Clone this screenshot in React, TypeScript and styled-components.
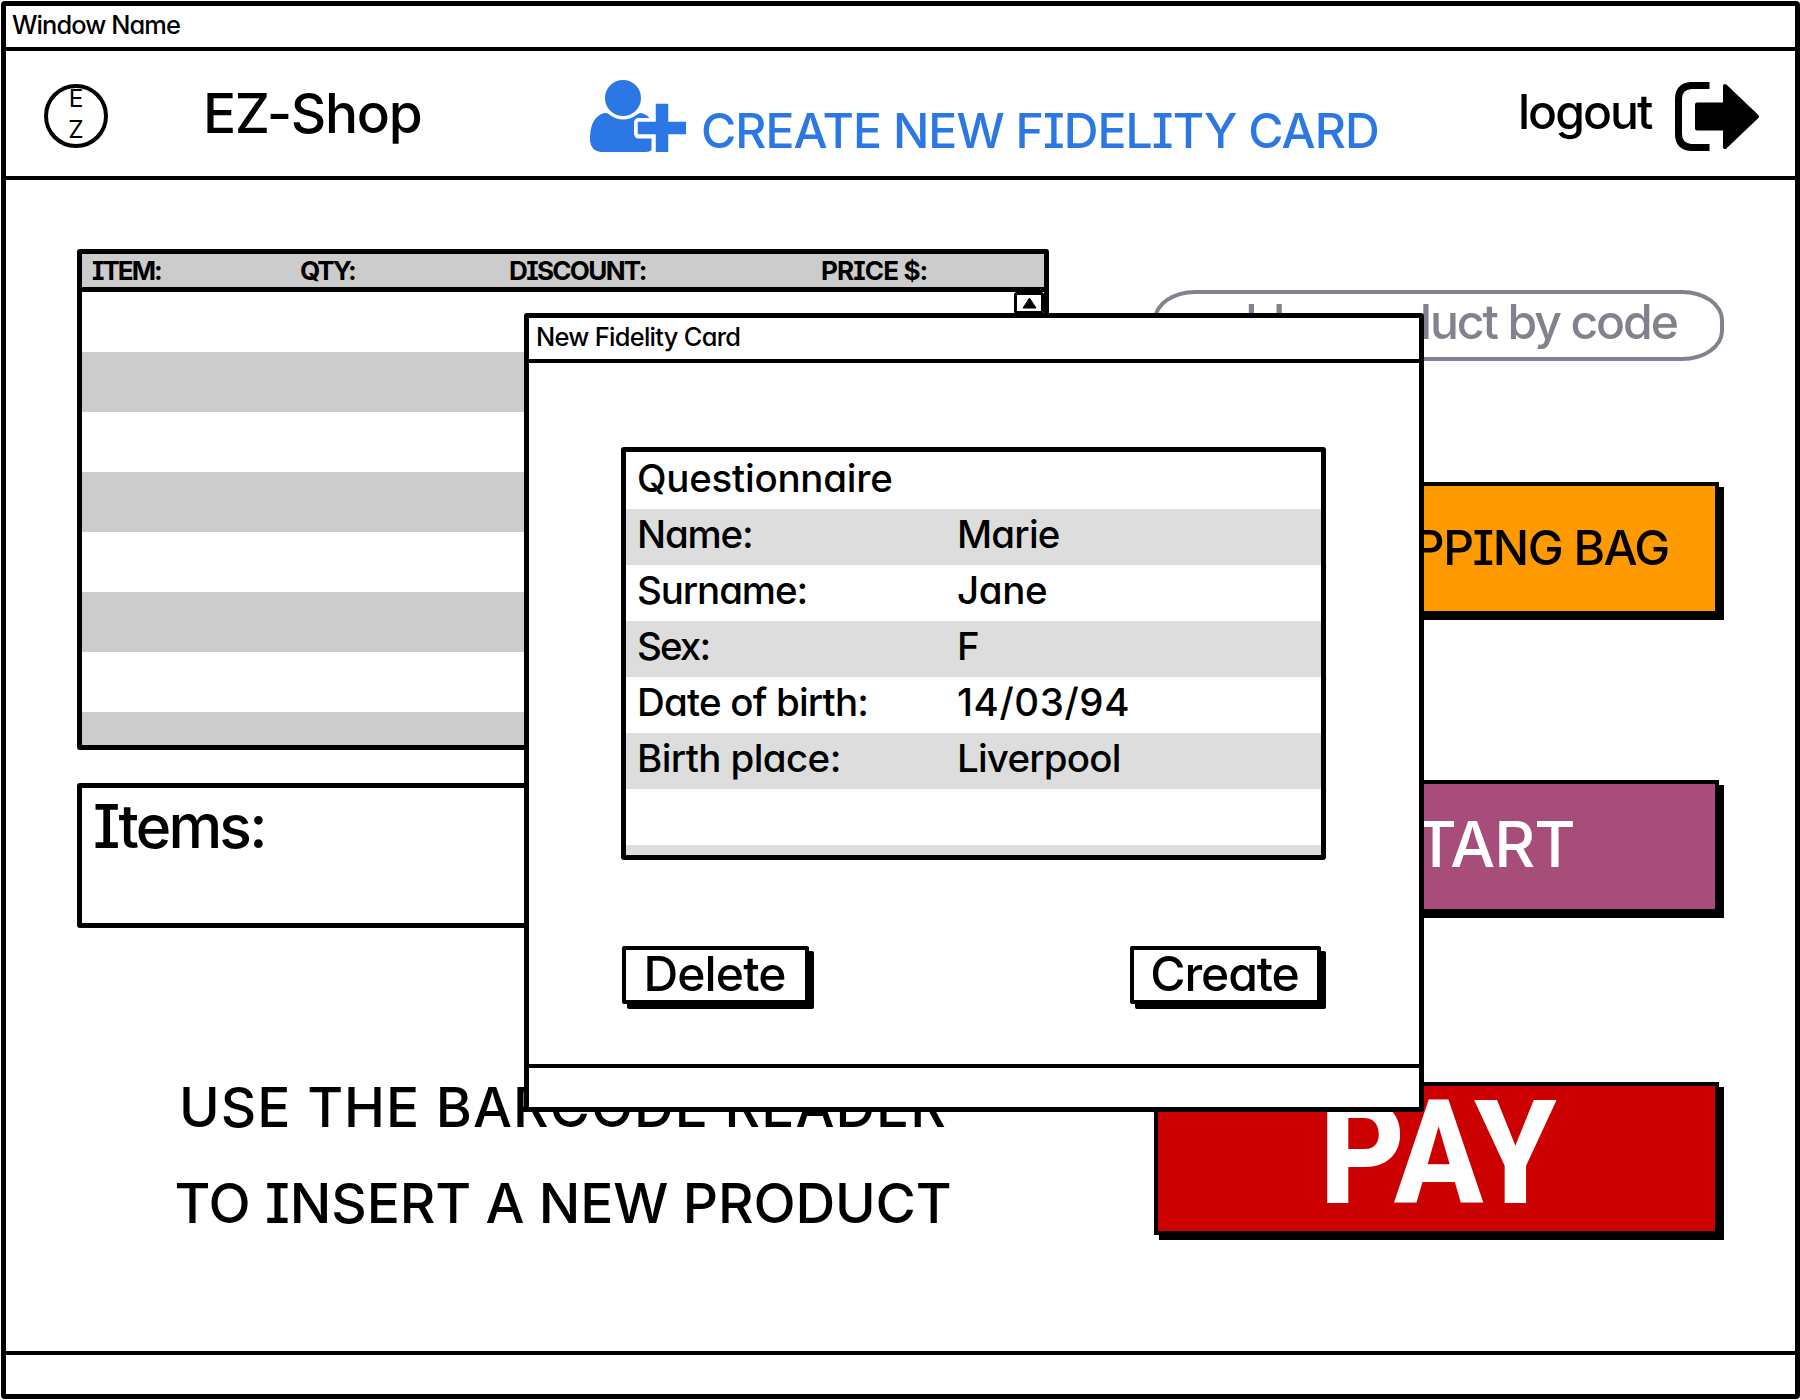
import React from "react";
import styled, { createGlobalStyle } from "styled-components";

const Global = createGlobalStyle`
  * { box-sizing: border-box; }
  body { margin: 0; background: #fff; overflow: hidden; }
`;

const ink = "#000";
const blue = "#2b78e4";
const slate = "#82828e";

const Screen = styled.div`
  position: relative;
  width: 1800px;
  height: 1400px;
  padding: 1px 0 1px 1px;
  color: ${ink};
  font-family: Inter, "Open Sans", sans-serif;
  font-feature-settings: "cv11", "cv08";
`;

const AppWindow = styled.div`
  display: flex;
  flex-direction: column;
  height: 1398px;
  border: 5px solid ${ink};
  border-radius: 4px;
  background: #fff;
`;

const Label = styled.span<{ $size: number; $spacing?: number; $weight?: number }>`
  font-size: ${(p) => p.$size}px;
  font-weight: ${(p) => p.$weight ?? 500};
  letter-spacing: ${(p) => p.$spacing ?? 0}px;
  line-height: 1;
  white-space: pre;
`;

const TitleBar = styled.div<{ $height: number; $indent: number }>`
  display: flex;
  flex: none;
  align-items: center;
  height: ${(p) => p.$height}px;
  padding: 0 0 3px ${(p) => p.$indent}px;
  border-bottom: 4.5px solid ${ink};
`;

const StatusBar = styled.div`
  flex: none;
  height: 43px;
  border-top: 4.5px solid ${ink};
`;

const Header = styled.header`
  display: flex;
  flex: none;
  height: 129px;
  border-bottom: 4px solid ${ink};
`;

const Logo = styled.div`
  display: flex;
  flex-direction: column;
  align-items: center;
  width: 64px;
  height: 64px;
  margin: 33px 0 0 38px;
  border: 4px solid ${ink};
  border-radius: 50%;
  font-size: 24.5px;
  line-height: 31.5px;
`;

const LogoLetter = styled.span`
  &:first-child { margin-top: -5px; }
`;

const Brand = styled.h1`
  display: flex;
  width: 387px;
  margin: 35px 0 0 95px;
`;

const FidelityLink = styled.a`
  display: flex;
  width: 893px;
  padding-top: 29px;
  gap: 15px;
  color: ${blue};
`;

const FidelityText = styled.div`
  padding-top: 27px;
`;

const Logout = styled.a`
  display: flex;
  width: 280px;
  gap: 25px;
  padding: 31px 0 0 35px;
`;

const LogoutText = styled.div`
  width: 132px;
  padding-top: 6px;
`;

const Main = styled.main`
  display: flex;
  flex: 1;
  gap: 104px;
  padding: 69px 0 0 71px;
`;

const CartColumn = styled.section`
  width: 972px;
`;

const ActionColumn = styled.section`
  width: 571px;
  padding-top: 41px;
`;

const Cart = styled.div`
  height: 501px;
  border: 5px solid ${ink};
  border-radius: 3px;
`;

const CartHead = styled.div`
  display: grid;
  grid-template-columns: 208px 209px 312px 1fr;
  align-items: center;
  height: 38px;
  padding: 3px 0 0 10px;
  border-bottom: 5px solid ${ink};
  background: #ccc;
`;

const CartBody = styled.div`
  display: flex;
  justify-content: flex-end;
  height: 453px;
  background: repeating-linear-gradient(#fff 0 60px, #ccc 60px 120px);
`;

const ScrollUp = styled.div`
  display: flex;
  align-items: center;
  justify-content: center;
  width: 30px;
  height: 22px;
  border: 3px solid ${ink};
  border-radius: 3px;
  background: #fff;
`;

const ItemsBox = styled.div`
  height: 145px;
  margin-top: 33px;
  padding: 8px 0 0 11px;
  border: 5px solid ${ink};
  border-radius: 3px;
`;

const Instruction = styled.p`
  display: flex;
  flex-direction: column;
  align-items: center;
  gap: 41px;
  margin: 152px 0 0;
`;

const CodeField = styled.div`
  display: flex;
  align-items: center;
  justify-content: center;
  height: 71px;
  padding-bottom: 6px;
  border: 4px solid ${slate};
  border-radius: 42px / 30px;
  color: ${slate};
`;

const ActionButton = styled.button<{ $fill: string; $color: string; $height: number; $gap: number; $lift: number }>`
  display: flex;
  align-items: center;
  justify-content: center;
  width: 565px;
  height: ${(p) => p.$height}px;
  margin: ${(p) => p.$gap}px 0 0 1px;
  padding: 0 0 ${(p) => p.$lift}px;
  border: 4px solid ${ink};
  box-shadow: 5px 5px 0 ${ink};
  background: ${(p) => p.$fill};
  color: ${(p) => p.$color};
  font-family: inherit;
  font-feature-settings: inherit;
`;

const PayText = styled.span`
  padding-left: 4px;
  font-family: Roboto, sans-serif;
  font-size: 145px;
  font-weight: 800;
  line-height: 1;
  transform: scaleX(0.91);
`;

const Dialog = styled.div`
  position: absolute;
  top: 312.5px;
  left: 524px;
  display: flex;
  flex-direction: column;
  width: 900px;
  height: 799px;
  border: 5px solid ${ink};
  border-radius: 3px;
  background: #fff;
`;

const DialogBody = styled.div`
  display: flex;
  flex: 1;
  flex-direction: column;
  padding: 83.5px 93px 0 92px;
`;

const Form = styled.div`
  height: 413px;
  padding-top: 1px;
  border: 5px solid ${ink};
  border-radius: 3px;
  background: repeating-linear-gradient(#fff 0 56px, #ddd 56px 112px) 0 1px no-repeat;
`;

const FormRow = styled.div`
  display: grid;
  grid-template-columns: 320px 1fr;
  align-items: center;
  height: 56px;
  padding: 0 0 5px 11px;
`;

const DialogActions = styled.div`
  display: flex;
  justify-content: space-between;
  padding: 86px 5px 0 1px;
`;

const DialogButton = styled.button<{ $width: number }>`
  display: flex;
  align-items: center;
  justify-content: center;
  width: ${(p) => p.$width}px;
  height: 58px;
  padding: 0 2px 0 0;
  border: 4px solid ${ink};
  border-radius: 2px;
  background: #fff;
  box-shadow: 5px 5px 0 ${ink};
  color: ${ink};
  font-family: inherit;
  font-feature-settings: inherit;
`;

const AddUserIcon = () => (
  <svg width="96" height="72" viewBox="0 0 96 72" fill={blue}>
    <circle cx="33" cy="18" r="18" />
    <path d="M14 33Q17 32.500 18.500 34Q33 45 48 34Q50 32.500 53 33.500Q57 34.500 59.500 38H49Q44 38 44 43V53Q44 58.500 49 58.500H61.500V70Q60 72 56 72H11Q1 71 0 61V56Q1 37 14 33Z" />
    <path d="M66 24H78V42H96V54H78V72H66V54H48V42H66Z" stroke={blue} strokeWidth="0.500" strokeLinejoin="round" />
  </svg>
);

const LogoutIcon = () => (
  <svg width="85" height="70" viewBox="0 0 85 70">
    <path d="M34.500 3.500H16Q3.500 4.500 3.500 17V52Q3.500 64.500 16 65.500H34.500" fill="none" stroke={ink} strokeWidth="7" />
    <path d="M22 22.500H50V4L82 34.500L50 65V46.500H22Z" fill={ink} stroke={ink} strokeWidth="4" strokeLinejoin="round" />
  </svg>
);

const columns: [string, number][] = [["ITEM:", -2], ["QTY:", -2.2], ["DISCOUNT:", -1.7], ["PRICE $:", -0.9]];

const fields: [string, number, string, number][] = [
  ["Questionnaire", -0.25, "", 0],
  ["Name:", -1.2, "Marie", -0.8],
  ["Surname:", -1.1, "Jane", -0.4],
  ["Sex:", -1.9, "F", 0],
  ["Date of birth:", -0.8, "14/03/94", 0.6],
  ["Birth place:", -0.6, "Liverpool", -0.8],
];

export default function App() {
  return (
    <Screen>
      <Global />
      <AppWindow>
        <TitleBar $height={44.5} $indent={6}>
          <Label $size={25.4} $spacing={-0.9} $weight={450}>Window Name</Label>
        </TitleBar>
        <Header>
          <Logo>
            <LogoLetter>E</LogoLetter>
            <LogoLetter>Z</LogoLetter>
          </Logo>
          <Brand>
            <Label $size={55} $spacing={-1.3}>EZ-Shop</Label>
          </Brand>
          <FidelityLink>
            <AddUserIcon />
            <FidelityText>
              <Label $size={48.1} $spacing={-0.95}>CREATE NEW FIDELITY CARD</Label>
            </FidelityText>
          </FidelityLink>
          <Logout>
            <LogoutText>
              <Label $size={48.1} $spacing={-2}>logout</Label>
            </LogoutText>
            <LogoutIcon />
          </Logout>
        </Header>
        <Main>
          <CartColumn>
            <Cart>
              <CartHead>
                {columns.map(([name, spacing]) => (
                  <Label key={name} $size={26.1} $weight={700} $spacing={spacing}>{name}</Label>
                ))}
              </CartHead>
              <CartBody>
                <ScrollUp>
                  <svg width="15" height="12" viewBox="0 0 15 12"><path d="M7.500 1L14 11H1Z" fill={ink} stroke={ink} strokeLinejoin="round" /></svg>
                </ScrollUp>
              </CartBody>
            </Cart>
            <ItemsBox>
              <Label $size={60.5} $spacing={-2.8}>Items:</Label>
            </ItemsBox>
            <Instruction>
              <Label $size={55} $spacing={1}>USE THE BARCODE READER</Label>
              <Label $size={55} $spacing={-0.15}>TO INSERT A NEW PRODUCT</Label>
            </Instruction>
          </CartColumn>
          <ActionColumn>
            <CodeField>
              <Label $size={48.1} $spacing={-2.1}>add a product by code</Label>
            </CodeField>
            <ActionButton $fill="#ff9900" $color={ink} $height={133} $gap={121} $lift={0}>
              <Label $size={48.1} $spacing={-1.5}>ADD SHOPPING BAG</Label>
            </ActionButton>
            <ActionButton $fill="#a64d79" $color="#fff" $height={133} $gap={165} $lift={3}>
              <Label $size={63.3} $spacing={-1}>RESTART</Label>
            </ActionButton>
            <ActionButton $fill="#cc0000" $color="#fff" $height={153} $gap={169} $lift={10}>
              <PayText>PAY</PayText>
            </ActionButton>
          </ActionColumn>
        </Main>
        <StatusBar />
      </AppWindow>
      <Dialog role="dialog">
        <TitleBar $height={45.5} $indent={7}>
          <Label $size={25.4} $spacing={-0.7} $weight={450}>New Fidelity Card</Label>
        </TitleBar>
        <DialogBody>
          <Form>
            {fields.map(([name, a, value, b]) => (
              <FormRow key={name}>
                <Label $size={38.5} $spacing={a}>{name}</Label>
                <Label $size={38.5} $spacing={b}>{value}</Label>
              </FormRow>
            ))}
          </Form>
          <DialogActions>
            <DialogButton $width={187}>
              <Label $size={48.1} $spacing={-0.9}>Delete</Label>
            </DialogButton>
            <DialogButton $width={191}>
              <Label $size={48.1} $spacing={-1.1}>Create</Label>
            </DialogButton>
          </DialogActions>
        </DialogBody>
        <StatusBar />
      </Dialog>
    </Screen>
  );
}
